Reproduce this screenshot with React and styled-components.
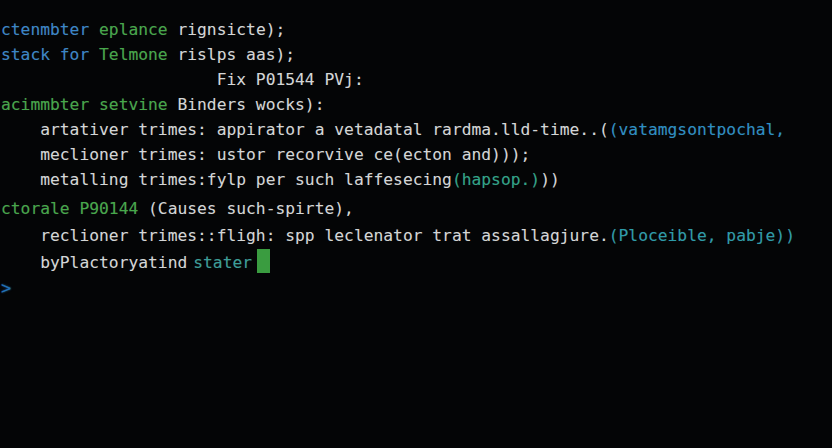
import React from 'react';
import styled, { createGlobalStyle } from 'styled-components';

const COLORS = {
  text: '#d4d6d6',
  blue: '#3a86c8',
  green: '#46a84a',
  teal: '#2b8fc4',
  mint: '#2ea488',
  cyan: '#2c9caa',
  sea: '#3a9e98',
  cursor: '#3a9c40',
  prompt: '#2270b4',
};

const GlobalStyle = createGlobalStyle`
  html, body {
    margin: 0;
    padding: 0;
    background: #040506;
  }
`;

const Terminal = styled.div`
  width: 832px;
  height: 448px;
  box-sizing: border-box;
  padding: 17px 0 0 1px;
  background: #040506;
  font-family: "DejaVu Sans Mono", "Liberation Mono", monospace;
  font-size: 16.3px;
  color: ${COLORS.text};
  overflow: hidden;
`;

const Block = styled.div`
  margin-bottom: ${({ gap }) => gap || 0}px;
`;

const Line = styled.div`
  white-space: pre;
  height: ${({ h }) => h || 25}px;
  line-height: ${({ h }) => h || 25}px;
  text-shadow: 0 0 1px rgba(255, 255, 255, 0.15);
`;

const Seg = styled.span`
  color: ${({ c }) => COLORS[c] || COLORS.text};
  margin-left: ${({ ml }) => ml || 0}px;
`;

const Cursor = styled.span`
  display: inline-block;
  width: 13px;
  height: 24px;
  margin-left: 5px;
  vertical-align: -5px;
  background: ${COLORS.cursor};
`;

const Prompt = styled.span`
  color: ${COLORS.prompt};
  font-size: 17px;
  text-shadow: 0 0 2px rgba(34, 112, 180, 0.8);
`;

const top = [
  [['ctenmbter ', 'blue'], ['eplance', 'green'], [' rignsicte);']],
  [['stack for ', 'blue'], ['Telmone', 'green'], [' rislps aas);']],
  [['                      Fix P01544 PVj:']],
  [['acimmbter setvine', 'green'], [' Binders wocks):']],
  [['    artativer trimes: appirator a vetadatal rardma.lld-time..('], ['(vatamgsontpochal,', 'teal']],
  [['    meclioner trimes: ustor recorvive ce(ecton and)));']],
  [['    metalling trimes:fylp per such laffesecing'], ['(hapsop.)', 'mint'], ['))']],
];

const bottom = [
  [['ctorale P90144', 'green'], [' (Causes such-spirte),']],
  [['    reclioner trimes::fligh: spp leclenator trat assallagjure.'], ['(Ploceible, pabje))', 'cyan']],
];

const renderLine = (segs, i, h) => (
  <Line key={i} h={h}>
    {segs.map(([t, c], j) => (
      <Seg key={j} c={c}>{t}</Seg>
    ))}
  </Line>
);

const App = () => (
  <>
    <GlobalStyle />
    <Terminal>
      <Block gap={3}>{top.map((s, i) => renderLine(s, i, 25))}</Block>
      <Block>
        {bottom.map((s, i) => renderLine(s, i, 27))}
        <Line h={26}>
          <Seg>{'    byPlactoryatind'}</Seg>
          <Seg c="sea" ml={6}>stater</Seg>
          <Cursor />
        </Line>
        <Line h={26}>
          <Prompt>&gt;</Prompt>
        </Line>
      </Block>
    </Terminal>
  </>
);

export default App;
